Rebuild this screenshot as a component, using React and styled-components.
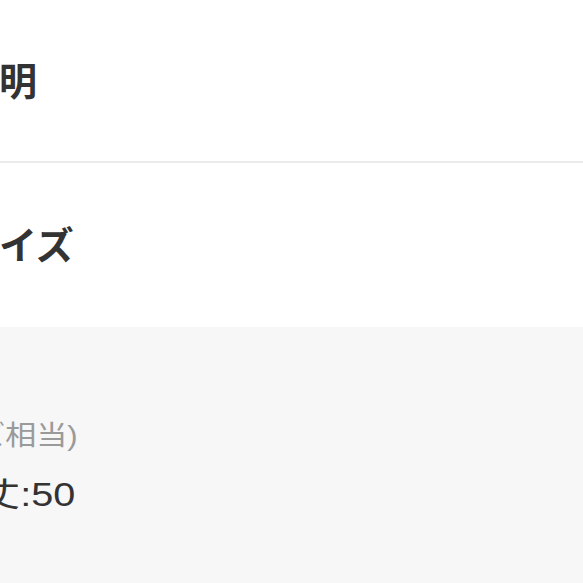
import styled, { createGlobalStyle } from 'styled-components';

const GlobalStyle = createGlobalStyle`
  html, body {
    margin: 0;
    padding: 0;
    background: #ffffff;
  }
  body {
    font-family: "Liberation Sans", "Noto Sans CJK JP", sans-serif;
    color: #333333;
  }
`;

export default function App() {
  return (
    <>
      <GlobalStyle />
      <S.Page>
        <S.Section divided>
          <S.Heading>説明</S.Heading>
        </S.Section>
        <S.Section>
          <S.Heading>サイズ</S.Heading>
        </S.Section>
        <S.Details>
          <S.Note>サイズ相当)</S.Note>
          <S.Spec>着丈:50</S.Spec>
        </S.Details>
      </S.Page>
    </>
  );
}

// -------------------------------------------------- styling ----------------------------------------------
const S = {};
S.Page = styled.div`
  width: 583px;
  height: 583px;
  overflow: hidden;
  display: flex;
  flex-direction: column;
`;

S.Section = styled.div`
  height: ${({ divided }) => (divided ? '163px' : '164px')};
  flex-shrink: 0;
  display: flex;
  align-items: center;
  box-sizing: border-box;
  border-bottom: ${({ divided }) => (divided ? '2px solid #ebebeb' : 'none')};
`;

S.Heading = styled.h2`
  margin: 2px 0 0 -39px;
  font-size: 38px;
  font-weight: 700;
  line-height: 1;
  color: #333333;
  white-space: nowrap;
`;

S.Details = styled.div`
  flex: 1;
  background: #f7f7f7;
  padding-top: 91px;
  display: flex;
  flex-direction: column;
  gap: 23px;
`;

S.Note = styled.p`
  margin: 0 0 0 -87px;
  font-size: 27px;
  line-height: 36px;
  color: #9a9a9a;
  white-space: nowrap;
  transform: scaleX(1.15);
  transform-origin: left center;
`;

S.Spec = styled.p`
  margin: 0 0 0 -59px;
  font-size: 33px;
  line-height: 36px;
  color: #333333;
  white-space: nowrap;
  transform: scaleX(1.2);
  transform-origin: left center;
`;
